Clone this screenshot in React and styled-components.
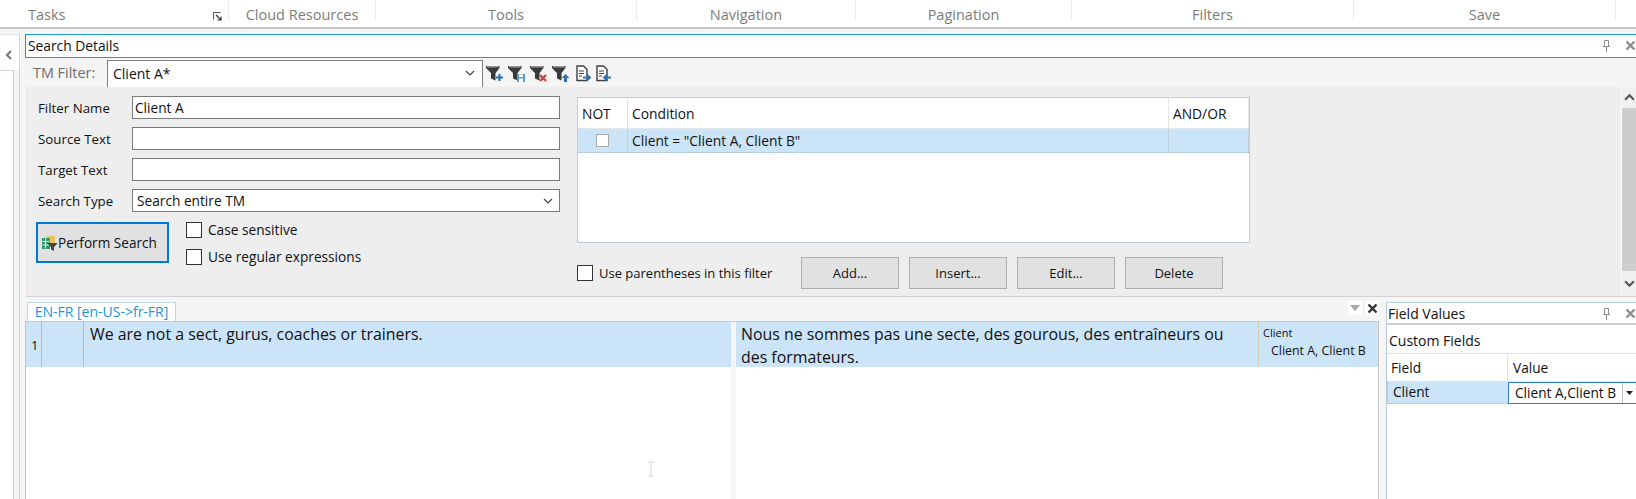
import React from 'react';
import styled, { createGlobalStyle } from 'styled-components';

const Global = createGlobalStyle`
  html, body { margin: 0; padding: 0; background: #f5f5f5; }
  * { box-sizing: border-box; }
  body { font-family: "Open Sans", "Noto Sans", "Liberation Sans", sans-serif; color: #111; }
`;

const Page = styled.div`
  position: relative;
  width: 1636px;
  height: 499px;
  overflow: hidden;
  display: flex;
  flex-direction: column;
  background: #f5f5f5;
  font-size: 13.7px;
`;

const Ribbon = styled.div`
  height: 29px;
  flex: none;
  display: flex;
  background: #fff;
  border-bottom: 2px solid #c6c6c6;
`;
const RibbonGroup = styled.div`
  position: relative;
  width: ${p => p.$w}px;
  flex: none;
  height: 21px;
  padding: 5px 0 0 ${p => (p.$left ? '28px' : 0)};
  text-align: ${p => (p.$left ? 'left' : 'center')};
  border-right: 1px solid #ececec;
  font-size: 14.5px;
  line-height: 20px;
  color: #7c7c7c;
`;
const Launcher = styled.svg`
  position: absolute;
  right: 6px;
  top: 12px;
`;

const Body = styled.div`
  flex: 1;
  min-height: 0;
  display: flex;
  padding-top: 5px;
`;
const Sidebar = styled.div`
  width: 25px;
  flex: none;
  display: flex;
  flex-direction: column;
`;
const SideHead = styled.div`
  width: 20px;
  height: 36px;
  flex: none;
  background: #fff;
  border-top: 1px solid #dfe5ea;
  border-right: 1px solid #cdd5dc;
  padding: 10px 0 0 4px;
`;
const SideBody = styled.div`
  width: 20px;
  flex: 1;
  background: #f5f5f5;
  border-right: 1px solid #cdd5dc;
`;
const SideInner = styled.div`
  width: 14px;
  height: 100%;
  background: #fff;
  border-top: 1px solid #c8d8e0;
  border-right: 1px solid #c8d0d8;
`;

const Main = styled.div`
  flex: 1;
  min-width: 0;
  display: flex;
  flex-direction: column;
`;
const DockHeader = styled.div`
  height: 24px;
  flex: none;
  display: flex;
  align-items: center;
  background: #fff;
  border: 1px solid #1a9ad6;
  border-width: 1px 0 1px 1px;
  padding: 0 0 1px 2px;
  font-size: 13.8px;
`;
const DockTitle = styled.span`
  flex: 1;
`;
const IconSlot = styled.span`
  width: ${p => p.$w}px;
  display: flex;
  justify-content: center;
  align-items: center;
  flex: none;
`;

const FilterBar = styled.div`
  height: 29px;
  flex: none;
  display: flex;
  align-items: flex-end;
  padding-left: 8px;
`;
const FilterLabel = styled.span`
  width: 74px;
  flex: none;
  align-self: center;
  font-size: 14.4px;
  color: #6d6d6d;
`;
const Combo = styled.div`
  width: 376px;
  height: 27px;
  flex: none;
  display: flex;
  align-items: center;
  justify-content: space-between;
  background: #fff;
  border: 1px solid #808080;
  border-bottom: none;
  padding: 0 7px 2px 5px;
  font-size: 14px;
`;
const IconRow = styled.div`
  display: flex;
  align-self: center;
  align-items: center;
  margin: 2px 0 0 3px;
  gap: 5px;
`;
const DocGap = styled.span`
  width: 2px;
  margin-left: -5px;
  flex: none;
`;

const FormArea = styled.div`
  height: 210px;
  flex: none;
  display: flex;
  background: #eee;
  margin-left: 1px;
  border-left: 1px solid #e2e2e2;
  border-bottom: 1px solid #d2d2d2;
`;
const FormLeft = styled.div`
  width: 533px;
  flex: none;
  padding: 9px 0 0 11px;
  display: flex;
  flex-direction: column;
  gap: 8px;
`;
const FieldRow = styled.div`
  display: flex;
  align-items: center;
  height: 23px;
`;
const FieldLabel = styled.span`
  width: 94px;
  flex: none;
  font-size: 13.3px;
`;
const TextBox = styled.div`
  width: 428px;
  height: 23px;
  display: flex;
  align-items: center;
  justify-content: space-between;
  background: #fff;
  border: 1px solid #7a7a7a;
  padding: 0 6px 0 ${p => p.$pad || 2}px;
  font-size: 13.7px;
`;
const ActionRow = styled.div`
  display: flex;
  margin: 2px 0 0 -2px;
  gap: 17px;
`;
const PerformButton = styled.div`
  width: 133px;
  height: 41px;
  display: flex;
  align-items: center;
  padding-left: 3px;
  gap: 1px;
  background: #e1e1e1;
  border: 2px solid #0078d7;
  font-size: 13.6px;
`;
const CheckCol = styled.div`
  display: flex;
  flex-direction: column;
  gap: 11px;
`;
const CheckLine = styled.label`
  display: flex;
  align-items: center;
  height: 16px;
  gap: 6px;
  font-size: ${p => (p.$small ? 13 : 13.7)}px;
`;
const CheckText = styled.span`
  margin-top: ${p => (p.$up ? -2 : 0)}px;
`;
const CheckBox = styled.span`
  width: 16px;
  height: 16px;
  flex: none;
  background: #fff;
  border: 1px solid #333;
`;

const ConditionCol = styled.div`
  width: 673px;
  flex: none;
  padding-top: 10px;
  margin-left: 17px;
`;
const ConditionGrid = styled.div`
  height: 146px;
  background: #fff;
  border: 1px solid #b8cfdc;
  font-size: 13.8px;
`;
const GridRow = styled.div`
  display: grid;
  grid-template-columns: 50px 541px 1fr;
  height: ${p => (p.$head ? 30 : 25)}px;
  background: ${p => (p.$head ? '#fff' : '#cce4f7')};
  border-top: ${p => (p.$head ? 'none' : '1px solid #e0e8ee')};
  border-bottom: ${p => (p.$head ? 'none' : '1px dotted #9fb4c4')};
`;
const GridCell = styled.div`
  display: flex;
  align-items: center;
  justify-content: ${p => (p.$center ? 'center' : 'flex-start')};
  padding: 0 4px;
  border-right: 1px solid ${p => (p.$head ? '#e4e4e4' : '#bcd0de')};
`;
const MiniCheck = styled.span`
  width: 13px;
  height: 13px;
  background: #fff;
  border: 1px solid #aaa;
`;
const BottomRow = styled.div`
  width: 646px;
  margin-top: 14px;
  display: flex;
  align-items: center;
  justify-content: space-between;
`;
const ButtonGroup = styled.div`
  display: flex;
  gap: 10px;
`;
const PlainButton = styled.div`
  width: 98px;
  height: 32px;
  display: flex;
  align-items: center;
  justify-content: center;
  background: #e1e1e1;
  border: 1px solid #adadad;
  font-size: 13px;
`;
const Spacer = styled.div`
  flex: 1;
`;
const Scrollbar = styled.div`
  width: 15px;
  flex: none;
  display: flex;
  flex-direction: column;
  background: #f0f0f0;
  border-left: 1px solid #fafafa;
`;
const ScrollArrow = styled.div`
  height: ${p => p.$h}px;
  flex: none;
  display: flex;
  align-items: center;
  justify-content: center;
`;
const ScrollThumb = styled.div`
  flex: 1;
  background: #cdcdcd;
`;

const Lower = styled.div`
  flex: 1;
  min-height: 0;
  display: flex;
`;
const ResultPanel = styled.div`
  width: 1354px;
  flex: none;
  display: flex;
  flex-direction: column;
`;
const TabStrip = styled.div`
  height: 24px;
  flex: none;
  position: relative;
  display: flex;
  align-items: flex-end;
  padding-left: 2px;
`;
const Tab = styled.div`
  width: 149px;
  height: 19px;
  background: #fff;
  border: 1px solid #c4d6e0;
  border-bottom: none;
  color: #1a96dc;
  font-size: 14px;
  line-height: 17px;
  text-align: center;
  white-space: nowrap;
`;
const TabTools = styled.div`
  position: absolute;
  right: 0;
  top: 4px;
  display: flex;
  align-items: center;
`;
const TabTool = styled.span`
  width: 14px;
  height: 14px;
  margin-left: 3px;
  display: flex;
  align-items: center;
  justify-content: center;
  background: #fff;
`;
const ResultGrid = styled.div`
  flex: 1;
  display: flex;
  border-left: 1px solid #bcc6ce;
  border-right: 1px solid #c4c4c4;
  border-top: 1px solid #b8cfdc;
`;
const Pane = styled.div`
  width: ${p => p.$w}px;
  flex: ${p => (p.$w ? 'none' : 1)};
  background: #fff;
`;
const PaneGap = styled.div`
  width: 5px;
  flex: none;
  background: #f5f5f5;
`;
const SegRow = styled.div`
  height: 45px;
  display: flex;
  background: #cce4f7;
`;
const NumCell = styled.div`
  width: ${p => p.$w}px;
  flex: none;
  display: flex;
  align-items: center;
  padding-left: 5px;
  font-size: 13px;
  border-right: 1px solid #bcbcbc;
`;
const SegText = styled.div`
  flex: 1;
  padding: 1px ${p => p.$right || 5}px 0 ${p => p.$left || 6}px;
  font-size: 15.9px;
  line-height: 23px;
`;
const ClientCell = styled.div`
  width: 120px;
  flex: none;
  border-left: 1px solid #cfc9b8;
  padding: 3px 0 0 4px;
  font-size: 11px;
  line-height: 15px;
`;
const ClientValue = styled.div`
  padding-left: 8px;
  margin-top: 3px;
  font-size: 12.4px;
`;

const FieldPanel = styled.div`
  flex: 1;
  margin: 5px 0 0 7px;
  min-width: 0;
  display: flex;
  flex-direction: column;
  background: #fff;
  border-left: 1px solid #b8cbd6;
`;
const FieldHead = styled.div`
  height: 23px;
  flex: none;
  display: flex;
  align-items: center;
  padding: 1px 0 0 1px;
  border-top: 1px solid #b8cfdc;
  border-bottom: 2px solid #cfcfcf;
  font-size: 14px;
`;
const CustomTitle = styled.div`
  height: 28px;
  flex: none;
  display: flex;
  align-items: center;
  padding: 3px 0 0 2px;
  font-size: 14px;
`;
const FieldTable = styled.div`
  display: grid;
  grid-template-columns: 121px 1fr;
  grid-template-rows: 28px 22px;
  border-top: 1px solid #e0e0e0;
  font-size: 13.7px;
`;
const HeadCell = styled.div`
  display: flex;
  align-items: center;
  padding-left: ${p => (p.$first ? 4 : 5)}px;
  border-right: ${p => (p.$first ? '1px solid #e4e4e4' : 'none')};
  border-bottom: 1px solid #e4e4e4;
`;
const NameCell = styled.div`
  display: flex;
  align-items: center;
  padding: 0 0 2px 5px;
  background: #cce4f7;
  border: 1px dotted #9fb4c4;
  border-width: 0 0 1px 1px;
`;
const ValueCell = styled.div`
  display: flex;
  align-items: center;
  justify-content: space-between;
  padding-left: 6px;
  border: 1px solid #2a7fc8;
  border-right: none;
  white-space: nowrap;
`;
const ValueText = styled.span`
  margin-top: -2px;
`;
const ValueDrop = styled.span`
  width: 14px;
  height: 100%;
  flex: none;
  display: flex;
  align-items: center;
  justify-content: center;
  border-left: 1px solid #c0c0c0;
`;
const CursorMark = styled.svg`
  position: absolute;
  left: 647px;
  top: 461px;
`;

const Chevron = ({ dir = 'down', size = 10, color = '#555', w = 1.2 }) => {
  const d = {
    down: 'M1 3l4 4 4-4',
    up: 'M1 7l4-4 4 4',
    left: 'M7 1L3 5l4 4',
  }[dir];
  return (
    <svg width={size} height={size} viewBox="0 0 10 10">
      <path d={d} fill="none" stroke={color} strokeWidth={w} />
    </svg>
  );
};
const CloseX = ({ color = '#8c8c8c' }) => (
  <svg width="11" height="11" viewBox="0 0 11 11">
    <path d="M1.500 1.500l8 8M9.500 1.500l-8 8" stroke={color} strokeWidth="2.4" />
  </svg>
);
const Pin = () => (
  <svg width="9" height="14" viewBox="0 0 9 14">
    <path d="M2.500 1.500h4v6h-4zM1 7.500h7M4.500 8v5" fill="none" stroke="#8c8c8c" />
  </svg>
);
const Funnel = ({ children }) => (
  <svg width="17" height="17" viewBox="0 0 17 17">
    <path d="M0 1h13.500v2L9.500 8v7.500L5 13.500V8L0 3z" fill="#3a3a3a" />
    <path d="M1 1.800h11.500" stroke="#a0a0a0" strokeWidth="1.400" />
    {children}
  </svg>
);
const Doc = ({ children }) => (
  <svg width="15" height="17" viewBox="0 0 15 17">
    <path d="M1 1h6.500l3.500 3.500V15.500H1z" fill="#fff" stroke="#3f3f3f" strokeWidth="1.400" />
    <path d="M3 6h5M3 8.500h5M3 11h3" stroke="#3f3f3f" />
    {children}
  </svg>
);

const groups = [
  ['Cloud Resources', 147],
  ['Tools', 261],
  ['Navigation', 219],
  ['Pagination', 216],
  ['Filters', 282],
  ['Save', 262],
];

export default function App() {
  return (
    <Page>
      <Global />
      <Ribbon>
        <RibbonGroup $w={229} $left>
          Tasks
          <Launcher width="9" height="9" viewBox="0 0 9 9">
            <path d="M0.500 0.500h7M0.500 0.500v7" stroke="#555" fill="none" />
            <path d="M3 3l5 5M8 4.500V8H4.500" stroke="#333" fill="none" strokeWidth="1.200" />
          </Launcher>
        </RibbonGroup>
        {groups.map(([name, w]) => (
          <RibbonGroup key={name} $w={w}>{name}</RibbonGroup>
        ))}
      </Ribbon>
      <Body>
        <Sidebar>
          <SideHead><Chevron dir="left" w={2} color="#777" /></SideHead>
          <SideBody><SideInner /></SideBody>
        </Sidebar>
        <Main>
          <DockHeader>
            <DockTitle>Search Details</DockTitle>
            <IconSlot $w={36}><Pin /></IconSlot>
            <IconSlot $w={12}><CloseX /></IconSlot>
          </DockHeader>
          <FilterBar>
            <FilterLabel>TM Filter:</FilterLabel>
            <Combo>
              <span>Client A*</span>
              <Chevron color="#444" />
            </Combo>
            <IconRow>
              <Funnel><path d="M10 12.500h7M13.500 9v7" stroke="#2f75b5" strokeWidth="2.200" /></Funnel>
              <Funnel>
                <path d="M9 9h8v8H9z" fill="#5b9bd5" />
                <path d="M11 9.500h4v2.500h-4zM11 13.500h4V17h-4z" fill="#fff" />
              </Funnel>
              <Funnel><path d="M10 10l6 6M16 10l-6 6" stroke="#c8483c" strokeWidth="2.400" /></Funnel>
              <Funnel><path d="M13.500 9l4 4h-2.400v4h-3.200v-4H9.500z" fill="#2f75b5" /></Funnel>
              <DocGap />
              <Doc><path d="M7 12.500h5.500M10.500 9.500l3.500 3-3.500 3" stroke="#2f75b5" strokeWidth="2" fill="none" /></Doc>
              <Doc><path d="M15 12.500H9.500M11.500 9.500l-3.500 3 3.500 3" stroke="#2f75b5" strokeWidth="2" fill="none" /></Doc>
            </IconRow>
          </FilterBar>
          <FormArea>
            <FormLeft>
              <FieldRow><FieldLabel>Filter Name</FieldLabel><TextBox>Client A</TextBox></FieldRow>
              <FieldRow><FieldLabel>Source Text</FieldLabel><TextBox /></FieldRow>
              <FieldRow><FieldLabel>Target Text</FieldLabel><TextBox /></FieldRow>
              <FieldRow>
                <FieldLabel>Search Type</FieldLabel>
                <TextBox $pad={4}>Search entire TM<Chevron color="#444" /></TextBox>
              </FieldRow>
              <ActionRow>
                <PerformButton>
                  <svg width="16" height="16" viewBox="0 0 16 16">
                    <path d="M6 1h8v7H6z" fill="#f0c25e" />
                    <path d="M1 3h8v11H1z" fill="#2e9c68" />
                    <path d="M1.500 6.500h7M1.500 10h7M4.500 3.500v10" stroke="#e8f6ee" />
                    <path d="M7 8h9v1l-3 3v4l-3-1.500V12L7 9z" fill="#444" />
                  </svg>
                  Perform Search
                </PerformButton>
                <CheckCol>
                  <CheckLine><CheckBox /><CheckText $up>Case sensitive</CheckText></CheckLine>
                  <CheckLine><CheckBox /><CheckText $up>Use regular expressions</CheckText></CheckLine>
                </CheckCol>
              </ActionRow>
            </FormLeft>
            <ConditionCol>
              <ConditionGrid>
                <GridRow $head>
                  <GridCell $head>NOT</GridCell>
                  <GridCell $head>Condition</GridCell>
                  <GridCell $head>AND/OR</GridCell>
                </GridRow>
                <GridRow>
                  <GridCell $center><MiniCheck /></GridCell>
                  <GridCell>Client = "Client A, Client B"</GridCell>
                  <GridCell />
                </GridRow>
              </ConditionGrid>
              <BottomRow>
                <CheckLine $small><CheckBox /><CheckText>Use parentheses in this filter</CheckText></CheckLine>
                <ButtonGroup>
                  <PlainButton>Add...</PlainButton>
                  <PlainButton>Insert...</PlainButton>
                  <PlainButton>Edit...</PlainButton>
                  <PlainButton>Delete</PlainButton>
                </ButtonGroup>
              </BottomRow>
            </ConditionCol>
            <Spacer />
            <Scrollbar>
              <ScrollArrow $h={21}><Chevron dir="up" w={2} size={11} /></ScrollArrow>
              <ScrollThumb />
              <ScrollArrow $h={25}><Chevron w={2} size={11} /></ScrollArrow>
            </Scrollbar>
          </FormArea>
          <Lower>
            <ResultPanel>
              <TabStrip>
                <Tab>EN-FR [en-US-&gt;fr-FR]</Tab>
                <TabTools>
                  <TabTool>
                    <svg width="10" height="6" viewBox="0 0 10 6"><path d="M0 0h10L5 6z" fill="#a8a8a8" /></svg>
                  </TabTool>
                  <TabTool><CloseX color="#333" /></TabTool>
                </TabTools>
              </TabStrip>
              <ResultGrid>
                <Pane $w={705}>
                  <SegRow>
                    <NumCell $w={16}>1</NumCell>
                    <NumCell $w={42} />
                    <SegText>We are not a sect, gurus, coaches or trainers.</SegText>
                  </SegRow>
                </Pane>
                <PaneGap />
                <Pane>
                  <SegRow>
                    <SegText $left={5} $right={24}>Nous ne sommes pas une secte, des gourous, des entraîneurs ou des formateurs.</SegText>
                    <ClientCell>
                      Client
                      <ClientValue>Client A, Client B</ClientValue>
                    </ClientCell>
                  </SegRow>
                </Pane>
              </ResultGrid>
            </ResultPanel>
            <FieldPanel>
              <FieldHead>
                <DockTitle>Field Values</DockTitle>
                <IconSlot $w={36}><Pin /></IconSlot>
                <IconSlot $w={12}><CloseX /></IconSlot>
              </FieldHead>
              <CustomTitle>Custom Fields</CustomTitle>
              <FieldTable>
                <HeadCell $first>Field</HeadCell>
                <HeadCell>Value</HeadCell>
                <NameCell>Client</NameCell>
                <ValueCell>
                  <ValueText>Client A,Client B</ValueText>
                  <ValueDrop>
                    <svg width="7" height="4" viewBox="0 0 7 4"><path d="M0 0h7L3.500 4z" fill="#222" /></svg>
                  </ValueDrop>
                </ValueCell>
              </FieldTable>
            </FieldPanel>
          </Lower>
        </Main>
      </Body>
      <CursorMark width="8" height="16" viewBox="0 0 8 16">
        <path d="M1 1h6M4 1v14M1 15h6" stroke="#d4d4d4" fill="none" />
      </CursorMark>
    </Page>
  );
}
